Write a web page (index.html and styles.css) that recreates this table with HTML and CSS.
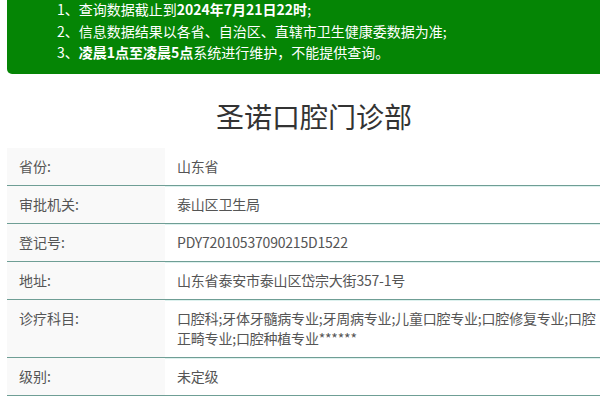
FILE: index.html
```html
<!DOCTYPE html>
<html lang="zh-CN">
<head>
<meta charset="utf-8">
<title>圣诺口腔门诊部</title>
<link rel="stylesheet" href="styles.css">
</head>
<body>
<div class="page">
  <div class="notice">
    <p>1、查询数据截止到<b>2024年7月21日22时</b>;</p>
    <p>2、信息数据结果以各省、自治区、直辖市卫生健康委数据为准;</p>
    <p>3、<b>凌晨1点至凌晨5点</b>系统进行维护，不能提供查询。</p>
  </div>
  <h1 class="title">圣诺口腔门诊部</h1>
  <div class="info">
    <div class="row"><div class="label">省份:</div><div class="value">山东省</div></div>
    <div class="row"><div class="label">审批机关:</div><div class="value">泰山区卫生局</div></div>
    <div class="row"><div class="label">登记号:</div><div class="value">PDY72010537090215D1522</div></div>
    <div class="row"><div class="label">地址:</div><div class="value">山东省泰安市泰山区岱宗大街357-1号</div></div>
    <div class="row"><div class="label">诊疗科目:</div><div class="value">口腔科;牙体牙髓病专业;牙周病专业;儿童口腔专业;口腔修复专业;口腔正畸专业;口腔种植专业******</div></div>
    <div class="row"><div class="label">级别:</div><div class="value">未定级</div></div>
  </div>
</div>
</body>
</html>
```
FILE: styles.css
```css
html, body {
  margin: 0;
  padding: 0;
  background: #fff;
}
body {
  font-family: "Noto Sans CJK SC", "Noto Sans", sans-serif;
  font-size: 14px;
  color: #555;
  overflow: hidden;
}
.page {
  width: 614px;
  padding-left: 7px;
}
.notice {
  background: #058505;
  color: #fff;
  margin-top: -1px;
  padding: 0 0 10px 50px;
  border-radius: 0 0 5px 5px;
  line-height: 21.5px;
  font-size: 14px;
}
.notice p {
  margin: 0;
}
.notice b {
  font-weight: bold;
}
.title {
  margin: 22px 0 12px;
  font-size: 28px;
  line-height: 40px;
  font-weight: normal;
  text-align: center;
  color: #333;
}
.row {
  display: flex;
  border-bottom: 1px solid #6f9e95;
  box-shadow: 0 1px 0 #ddf1ee;
  line-height: 20px;
}
.label {
  width: 158px;
  box-sizing: border-box;
  flex: none;
  background: #f9f9f9;
  padding: 8px 12px 9px;
  color: #555;
}
.value {
  flex: 1;
  padding: 8px 12px 9px;
  color: #555;
  letter-spacing: -0.2px;
}
```
